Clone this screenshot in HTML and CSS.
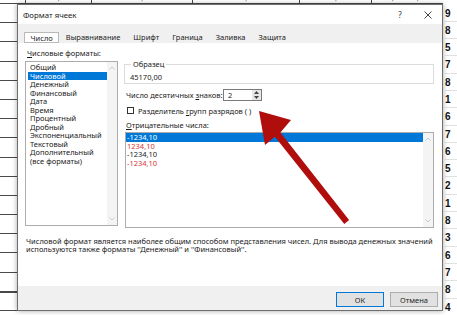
FILE: index.html
```html
<!DOCTYPE html>
<html lang="ru">
<head>
<meta charset="utf-8">
<title>Формат ячеек</title>
<link rel="stylesheet" href="styles.css">
</head>
<body>
<div class="sheet">
  <div class="sheet-left">
    <div class="row row-top">
      <span class="cell c0"></span><span class="cell c1">22,14</span><span class="cell c2">17,01</span><span class="cell c3">10,00</span><span class="cell c4">10,11</span><span class="cell c5">0,10 12,17</span>
    </div>
    <div class="row"></div><div class="row"></div><div class="row"></div><div class="row"></div>
    <div class="row"></div><div class="row"></div><div class="row"></div><div class="row"></div>
    <div class="row"></div><div class="row"></div><div class="row"></div><div class="row"></div>
    <div class="row"></div><div class="row"></div><div class="row"></div>
    <div class="row row-bottom">
      <span class="cell c0"></span><span class="cell c1">23,53</span><span class="cell c2">17,23</span><span class="cell c3">10,21</span><span class="cell c4">5,01</span><span class="cell c5"></span>
    </div>
  </div>
  <div class="sheet-right">
    <span>9</span><span>8</span><span>5</span><span>7</span><span>8</span><span>1</span><span>6</span><span>7</span><span>6</span><span>5</span><span>2</span><span>1</span><span>8</span><span>3</span><span>6</span><span>7</span><span>8</span><span>4</span>
  </div>
</div>

<div class="dialog">
  <div class="titlebar">
    <span class="title">Формат ячеек</span>
    <span class="tb-btn">?</span>
    <span class="tb-btn">
      <svg width="8" height="8" viewBox="0 0 8 8"><path d="M0.5 0.5 L7.5 7.5 M7.5 0.5 L0.5 7.5" stroke="#333" stroke-width="0.9" fill="none"/></svg>
    </span>
  </div>
  <div class="tabs">
    <span class="tab active">Число</span>
    <span class="tab">Выравнивание</span>
    <span class="tab">Шрифт</span>
    <span class="tab">Граница</span>
    <span class="tab">Заливка</span>
    <span class="tab">Защита</span>
  </div>
  <div class="page">
    <div class="columns">
      <div class="col-left">
        <div class="label"><u>Ч</u>исловые форматы:</div>
        <div class="listbox formats">
          <div class="items">
            <div class="item">Общий</div>
            <div class="item sel">Числовой</div>
            <div class="item">Денежный</div>
            <div class="item">Финансовый</div>
            <div class="item">Дата</div>
            <div class="item">Время</div>
            <div class="item">Процентный</div>
            <div class="item">Дробный</div>
            <div class="item">Экспоненциальный</div>
            <div class="item">Текстовый</div>
            <div class="item">Дополнительный</div>
            <div class="item">(все форматы)</div>
          </div>
          <div class="scroll">
            <svg width="6" height="4" viewBox="0 0 6 4"><path d="M0.5 3.5 L3 1 L5.5 3.5" stroke="#bdbdbd" stroke-width="0.8" fill="none"/></svg>
            <svg width="6" height="4" viewBox="0 0 6 4"><path d="M0.5 0.5 L3 3 L5.5 0.5" stroke="#bdbdbd" stroke-width="0.8" fill="none"/></svg>
          </div>
        </div>
      </div>
      <div class="col-right">
        <fieldset class="sample">
          <legend>Образец</legend>
          <div class="sample-value">45170,00</div>
        </fieldset>
        <div class="decimals">
          <span class="dec-label">Число десятичных <u>з</u>наков:</span>
          <span class="spin">
            <span class="spin-value">2</span>
            <span class="spin-btns">
              <svg width="5" height="3" viewBox="0 0 5 3"><path d="M0 3 L2.5 0 L5 3 Z" fill="#444"/></svg>
              <svg width="5" height="3" viewBox="0 0 5 3"><path d="M0 0 L2.5 3 L5 0 Z" fill="#444"/></svg>
            </span>
          </span>
        </div>
        <div class="check-row">
          <span class="checkbox"></span>
          <span>Разделитель <u>г</u>рупп разрядов ( )</span>
        </div>
        <div class="label neg-label"><u>О</u>трицательные числа:</div>
        <div class="listbox negatives">
          <div class="items">
            <div class="item sel">-1234,10</div>
            <div class="item red">1234,10</div>
            <div class="item">-1234,10</div>
            <div class="item red">-1234,10</div>
          </div>
          <div class="scroll">
            <svg width="6" height="4" viewBox="0 0 6 4"><path d="M0.5 3.5 L3 1 L5.5 3.5" stroke="#bdbdbd" stroke-width="0.8" fill="none"/></svg>
            <svg width="6" height="4" viewBox="0 0 6 4"><path d="M0.5 0.5 L3 3 L5.5 0.5" stroke="#bdbdbd" stroke-width="0.8" fill="none"/></svg>
          </div>
        </div>
      </div>
    </div>
    <p class="description">Числовой формат является наиболее общим способом представления чисел. Для вывода денежных значений<br>используются также форматы ''Денежный'' и ''Финансовый''.</p>
  </div>
  <div class="footer">
    <button class="btn default">ОК</button>
    <button class="btn">Отмена</button>
  </div>
</div>

<svg class="arrow" width="457" height="315" viewBox="0 0 457 315">
  <polygon points="259,111 291,120 280.4,132.4 349.1,220.1 344.3,223.9 274.9,136.7 265,145" fill="#b00d0d"/>
</svg>
</body>
</html>
```
FILE: styles.css
```css
* {
  box-sizing: border-box;
  margin: 0;
  padding: 0;
}

html,
body {
  width: 457px;
  height: 315px;
  overflow: hidden;
}

body {
  position: relative;
  background: #fff;
  color: #1a1a1a;
  font-family: "Noto Sans", "DejaVu Sans", sans-serif;
  font-size: 7.5px;
}

u {
  text-underline-offset: 1px;
}

/* ---------- background spreadsheet ---------- */
.sheet {
  display: flex;
  height: 315px;
}

.sheet-left {
  flex: 1;
  display: flex;
  flex-direction: column;
  margin-top: -15.2px;
}

.row {
  flex: 0 0 19.2px;
  display: flex;
  border-bottom: 1px solid #4a4a4a;
  font-family: "Liberation Sans", sans-serif;
  font-size: 9px;
  color: #222;
}

.row-top {
  align-items: flex-end;
}

.row-bottom {
  align-items: flex-start;
  border-top: 1px solid #4a4a4a;
}

.cell {
  height: 100%;
  border-right: 1px solid #4a4a4a;
  text-align: center;
  display: flex;
  justify-content: center;
}

.row-top .cell {
  align-items: flex-end;
  padding-bottom: 1px;
}

.row-bottom .cell {
  align-items: flex-start;
  padding-top: 1px;
}

.c0 { width: 26px; }
.c1 { width: 66px; }
.c2 { width: 101px; }
.c3 { width: 107px; }
.c4 { width: 72px; }
.c5 { flex: 1; border-right: none; }

.sheet-right {
  width: 14px;
  display: flex;
  flex-direction: column;
  padding-top: 4.5px;
  padding-left: 2px;
  font-family: "Liberation Sans", sans-serif;
  font-weight: bold;
  font-size: 10px;
  color: #111;
}

.sheet-right span {
  height: 17.3px;
  line-height: 17.3px;
  border-bottom: 1px solid #e0e0e0;
}

/* ---------- dialog ---------- */
.dialog {
  position: absolute;
  left: 17px;
  top: 4px;
  width: 426px;
  height: 307px;
  background: #fff;
  border: 1px solid #6f6f6f;
  box-shadow: 0 0 5px rgba(0, 0, 0, 0.35);
  display: flex;
  flex-direction: column;
}

.titlebar {
  height: 19px;
  display: flex;
  align-items: center;
  padding-left: 5px;
}

.title {
  flex: 1;
  font-size: 7.8px;
}

.tb-btn {
  width: 28px;
  display: flex;
  justify-content: center;
  align-items: center;
  font-size: 8px;
  color: #333;
}

.tabs {
  height: 19px;
  background: #f0f0f0;
  display: flex;
  align-items: flex-end;
  padding-left: 6px;
}

.tab {
  height: 11px;
  line-height: 10px;
  padding: 0 6.5px;
  color: #222;
}

.tab.active {
  background: #fff;
  border: 1px solid #b9b9b9;
  padding: 0 5.5px;
}

.page {
  flex: 1;
  display: flex;
  flex-direction: column;
  padding: 5px 8px 0 7px;
}

.columns {
  display: flex;
  gap: 6px;
}

.col-left {
  width: 93px;
  display: flex;
  flex-direction: column;
}

.label {
  line-height: 10px;
  padding-left: 2px;
}

.listbox {
  display: flex;
  border: 1px solid #acacac;
  background: #fff;
}

.formats {
  margin-top: 3px;
  height: 165px;
}

.items {
  flex: 1;
  padding: 1px 0 0 2px;
}

.item {
  line-height: 8.5px;
  height: 8.5px;
  padding-left: 2px;
  white-space: nowrap;
}

.item.sel {
  background: #0078d7;
  color: #fff;
}

.item.red {
  color: #d93434;
}

.scroll {
  width: 10px;
  background: #f4f4f4;
  display: flex;
  flex-direction: column;
  justify-content: space-between;
  align-items: center;
  padding: 4px 0;
}

.col-right {
  width: 310px;
  display: flex;
  flex-direction: column;
}

.sample {
  margin-top: 11.5px;
  border: 1px solid #dcdcdc;
  padding: 4px 5px 1.5px;
}

.sample legend {
  line-height: 9px;
  padding: 0 2px;
  margin-left: 1px;
}

.sample-value {
  line-height: 9px;
}

.decimals {
  margin-top: 5px;
  display: flex;
  align-items: center;
  height: 12px;
}

.dec-label {
  width: 99px;
  padding-left: 2px;
}

.spin {
  width: 39px;
  height: 12px;
  border: 1px solid #7a7a7a;
  display: flex;
  align-items: center;
}

.spin-value {
  flex: 1;
  padding-left: 4px;
}

.spin-btns {
  width: 9px;
  height: 100%;
  background: #e6e6e6;
  display: flex;
  flex-direction: column;
  justify-content: space-around;
  align-items: center;
}

.check-row {
  margin-top: 5px;
  height: 9px;
  display: flex;
  align-items: center;
  gap: 4px;
}

.checkbox {
  width: 7px;
  height: 7px;
  margin-left: 3px;
  border: 1px solid #333;
  background: #fff;
}

.neg-label {
  margin-top: 4.5px;
}

.negatives {
  margin-top: 2.5px;
  margin-left: 1px;
  height: 96px;
}

.negatives .items {
  padding: 0;
}

.negatives .item {
  padding-left: 1px;
}

.description {
  margin-top: 8.7px;
  padding-left: 1px;
  line-height: 8.5px;
  white-space: nowrap;
}

.footer {
  height: 24px;
  background: #f0f0f0;
  display: flex;
  justify-content: flex-end;
  align-items: flex-start;
  gap: 6px;
  padding: 6px 4px 0 0;
}

.btn {
  width: 48px;
  height: 15px;
  border: 1px solid #adadad;
  background: #e1e1e1;
  font-family: inherit;
  font-size: 7.5px;
  color: #222;
}

.btn.default {
  border-color: #0078d7;
}

.arrow {
  position: absolute;
  left: 0;
  top: 0;
  pointer-events: none;
}
```
